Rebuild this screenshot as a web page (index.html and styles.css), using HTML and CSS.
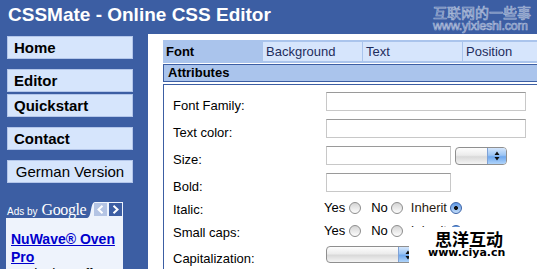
FILE: index.html
```html
<!DOCTYPE html>
<html lang="en">
<head>
<meta charset="utf-8">
<title>CSSMate - Online CSS Editor</title>
<link rel="stylesheet" href="styles.css">
</head>
<body>
<header class="header">
  <h1 class="title">CSSMate - Online CSS Editor</h1>
  <div class="wm-top">
    <div class="wm-top-cn">互联网的一些事</div>
    <div class="wm-top-url">www.yixieshi.com</div>
  </div>
</header>
<div class="layout">
  <nav class="sidebar">
    <a class="nav-btn" href="#">Home</a>
    <a class="nav-btn gap" href="#">Editor</a>
    <a class="nav-btn tight" href="#">Quickstart</a>
    <a class="nav-btn gap" href="#">Contact</a>
    <a class="nav-btn gap lang" href="#">German Version</a>
    <div class="ads">
      <div class="ads-head">
        <span class="ads-by">Ads by</span>
        <span class="ads-google">Google</span>
        <svg class="ads-nav" width="36" height="16" viewBox="0 0 36 16">
          <path d="M0 16 C5 16 3 0 8 0 H36 V16 Z" fill="#eef3fc"/>
          <rect x="7" y="1" width="13" height="13" fill="#b4c4e4"/>
          <polyline points="15.5,3.8 11.5,7.5 15.5,11.2" fill="none" stroke="#fff" stroke-width="2"/>
          <rect x="22" y="1" width="13" height="13" fill="#3c5ea3"/>
          <polyline points="26.5,3.8 30.5,7.5 26.5,11.2" fill="none" stroke="#fff" stroke-width="2"/>
        </svg>
      </div>
      <div class="ads-body">
        <a class="ad-link" href="#">NuWave® Oven Pro</a>
        <div class="ad-text">Exclusive Offer</div>
      </div>
    </div>
  </nav>
  <main class="main">
    <div class="panel">
      <div class="tabs">
        <div class="tab active">Font</div>
        <div class="tab">Background</div>
        <div class="tab">Text</div>
        <div class="tab">Position</div>
      </div>
      <div class="attr-bar">Attributes</div>
      <div class="form">
        <div class="row">
          <span class="label">Font Family:</span>
          <input class="field long" type="text">
        </div>
        <div class="row">
          <span class="label">Text color:</span>
          <input class="field long" type="text">
        </div>
        <div class="row">
          <span class="label">Size:</span>
          <div class="controls">
            <input class="field short" type="text">
            <div class="select size-sel">
              <span class="sel-btn">
                <svg width="6" height="10" viewBox="0 0 6 10"><path d="M3 0.5 L5.5 4 H0.5 Z M3 9.5 L5.5 6 H0.5 Z" fill="#111"/></svg>
              </span>
            </div>
          </div>
        </div>
        <div class="row">
          <span class="label">Bold:</span>
          <input class="field short" type="text">
        </div>
        <div class="row radios">
          <span class="label">Italic:</span>
          <div class="opts">
            <span class="opt-text">Yes</span><input class="radio r-yes" type="radio" name="italic">
            <span class="opt-text no">No</span><input class="radio r-no" type="radio" name="italic">
            <span class="opt-text inh">Inherit</span><input class="radio r-inh" type="radio" name="italic" checked>
          </div>
        </div>
        <div class="row radios">
          <span class="label">Small caps:</span>
          <div class="opts">
            <span class="opt-text">Yes</span><input class="radio r-yes" type="radio" name="caps">
            <span class="opt-text no">No</span><input class="radio r-no" type="radio" name="caps">
            <span class="opt-text inh">Inherit</span><input class="radio r-inh" type="radio" name="caps" checked>
          </div>
        </div>
        <div class="row sel-row">
          <span class="label">Capitalization:</span>
          <div class="select cap-sel">
            <span class="sel-btn">
              <svg width="6" height="10" viewBox="0 0 6 10"><path d="M3 0.5 L5.5 4 H0.5 Z M3 9.5 L5.5 6 H0.5 Z" fill="#111"/></svg>
            </span>
          </div>
        </div>
      </div>
    </div>
  </main>
</div>
<div class="wm-bottom">
  <div class="wm-bottom-cn">思洋互动</div>
  <div class="wm-bottom-url">www.ciya.cn</div>
</div>
</body>
</html>
```
FILE: styles.css
```css
html, body {
  margin: 0;
  height: 269px;
  overflow: hidden;
}
body {
  background: #3c5ea3;
  font-family: "Liberation Sans", Arial, sans-serif;
  position: relative;
}

/* header */
.header {
  height: 34px;
  box-sizing: border-box;
  padding: 4px 0 0 8px;
  position: relative;
}
.title {
  margin: 0;
  font-size: 19px;
  line-height: 22px;
  font-weight: bold;
  color: #fff;
}
.wm-top {
  position: absolute;
  left: 433px;
  top: 5px;
  color: rgba(255, 255, 255, 0.04);
  -webkit-text-stroke: 0.7px rgba(200, 210, 230, 0.8);
}
.wm-top-cn {
  font-family: "Noto Sans CJK SC", sans-serif;
  font-size: 14px;
  line-height: 15px;
}
.wm-top-url {
  font-size: 12.5px;
  line-height: 11px;
  margin-top: 1px;
  letter-spacing: -0.2px;
}

/* layout */
.layout {
  display: flex;
  height: 235px;
}
.sidebar {
  width: 148px;
  flex: none;
  box-sizing: border-box;
  padding: 2px 0 0 7px;
}
.nav-btn {
  display: block;
  width: 126px;
  height: 23px;
  box-sizing: border-box;
  border: 1px solid #b3c6ea;
  background: #d6e5fc;
  color: #000;
  font-size: 15px;
  line-height: 21px;
  font-weight: bold;
  padding-left: 6px;
  text-decoration: none;
}
.nav-btn.gap { margin-top: 10px; }
.nav-btn.tight { margin-top: 2px; }
.nav-btn.lang {
  font-weight: normal;
  text-align: center;
  padding-left: 0;
}

/* ads */
.ads {
  margin: 19px 0 0 -1px;
  width: 117px;
}
.ads-head {
  display: flex;
  align-items: baseline;
  height: 16px;
  color: #fff;
  position: relative;
}
.ads-by {
  font-size: 10px;
  padding-left: 1px;
}
.ads-google {
  font-family: "Liberation Serif", serif;
  font-size: 16px;
  line-height: 16px;
  letter-spacing: -0.4px;
  margin-left: 4px;
}
.ads-nav {
  position: absolute;
  right: 0;
  top: 0;
}
.ads-body {
  background: #eef3fc;
  padding: 12px 5px 0;
  height: 60px;
}
.ad-link {
  font-size: 14px;
  line-height: 16px;
  font-weight: bold;
  color: #0000cc;
  text-decoration: underline;
}
.ad-text {
  font-size: 14px;
  line-height: 16px;
  color: #000;
}

/* main */
.main {
  flex: 1;
  min-width: 0;
  background: #fff;
  padding: 6px 0 0 15px;
  overflow: hidden;
}
.panel {
  width: 420px;
}
.tabs {
  display: flex;
  height: 23px;
  box-sizing: border-box;
  border-top: 2px solid #aac4ec;
  border-bottom: 2px solid #aac4ec;
}
.tab {
  width: 100px;
  box-sizing: border-box;
  background: #d6e5fc;
  border-right: 1px solid #aac4ec;
  font-size: 13px;
  line-height: 19px;
  padding-left: 3px;
  color: #1f2d5c;
}
.tab.active {
  background: #aac4ec;
  color: #000;
  font-weight: bold;
}
.attr-bar {
  margin-top: 1px;
  height: 18px;
  box-sizing: border-box;
  border: 1px solid #3c5ea3;
  border-right: none;
  background: #aac4ec;
  font-size: 13px;
  line-height: 16px;
  font-weight: bold;
  padding-left: 4px;
}
.form {
  margin-top: 2px;
  border-top: 1px solid #3c5ea3;
  border-left: 1px solid #3c5ea3;
  padding: 7px 0 40px 9px;
  display: grid;
  row-gap: 8px;
}
.row {
  display: grid;
  grid-template-columns: 153px auto;
  height: 19px;
  align-items: end;
}
.row.radios { height: 15px; }
.row.sel-row { height: 18px; }
.label {
  font-size: 13px;
  line-height: 13px;
  margin-bottom: -1px;
  color: #000;
}
.field {
  display: block;
  height: 19px;
  box-sizing: border-box;
  margin: 0;
  padding: 0;
  border: 1px solid #c8c8c8;
  border-top-color: #9a9a9a;
  background: #fff;
}
.field.long { width: 200px; }
.field.short { width: 125px; }
.controls {
  display: flex;
  align-items: flex-end;
  gap: 4px;
}

/* selects */
.select {
  height: 18px;
  box-sizing: border-box;
  border: 1px solid #8f8f8f;
  border-radius: 4px;
  background: linear-gradient(#fdfdfd, #ececec 45%, #d9d9d9 55%, #f4f4f4);
  overflow: hidden;
  display: flex;
  justify-content: flex-end;
}
.size-sel { width: 52px; }
.cap-sel {
  width: 92px;
  height: 17px;
  align-self: start;
}
.sel-btn {
  width: 19px;
  height: 100%;
  box-sizing: border-box;
  border-left: 1px solid #7fa2d6;
  background: linear-gradient(#d4e6fc, #9cc5f4 45%, #6fa8ee 55%, #b0d4fa);
  display: flex;
  align-items: center;
  justify-content: center;
}

/* radios */
.opts {
  display: flex;
  align-items: center;
  height: 15px;
  margin-left: -2px;
  font-size: 13px;
  line-height: 15px;
}
.opt-text { color: #000; }
.opt-text.no { margin-left: 10px; }
.opt-text.inh { margin-left: 8px; color: #2a1a10; }
.radio {
  -webkit-appearance: none;
  appearance: none;
  width: 12px;
  height: 12px;
  margin: 0 0 0 4px;
  box-sizing: border-box;
  border-radius: 50%;
  border: 1px solid #8d8d8d;
  background: linear-gradient(#d4d4d4, #fdfdfd);
}
.radio.r-no, .radio.r-inh { margin-left: 3px; }
.radio:checked {
  border-color: #3b63a8;
  background: radial-gradient(circle, #111 0 1.6px, transparent 2.3px), linear-gradient(#5f98e4, #c2dcf9);
}

/* bottom watermark overlay */
.wm-bottom {
  position: absolute;
  left: 409px;
  top: 227px;
  width: 128px;
  height: 42px;
  background: #fff;
  box-sizing: border-box;
  padding: 4px 0 0 19px;
}
.wm-bottom-cn {
  font-family: "Noto Sans CJK SC", sans-serif;
  font-weight: bold;
  font-size: 17px;
  line-height: 15px;
  padding-left: 7px;
  color: #000;
  text-shadow: 1px 0 #fff, -1px 0 #fff, 0 1px #fff, 0 -1px #fff;
}
.wm-bottom-url {
  font-family: "DejaVu Sans", sans-serif;
  font-weight: bold;
  font-size: 11px;
  line-height: 11px;
  margin-top: 1px;
  color: #000;
}
```
